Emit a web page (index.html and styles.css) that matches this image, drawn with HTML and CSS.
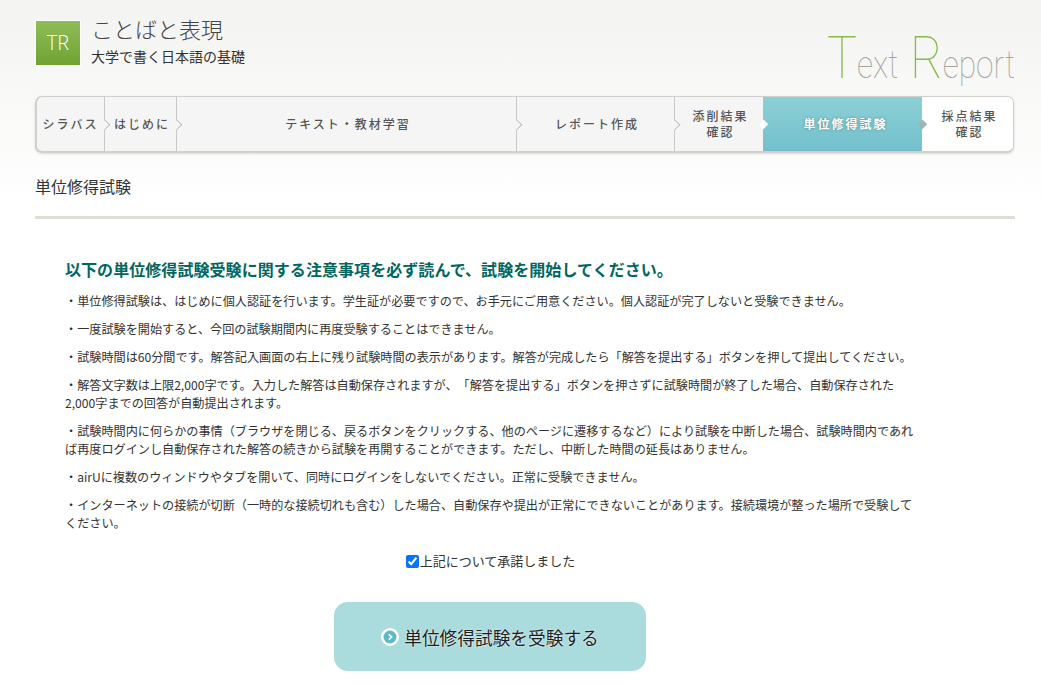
FILE: index.html
```html
<!DOCTYPE html>
<html lang="ja">
<head>
    <meta charset="UTF-8">
    <meta name="viewport" content="width=device-width, initial-scale=1.0">
    <title>単位修得試験 - ことばと表現</title>
    <link rel="stylesheet" href="styles.css">
</head>
<body>
    <header class="site-header">
        <div class="course">
            <div class="course-badge">TR</div>
            <div>
                <h1 class="course-title">ことばと表現</h1>
                <p class="course-sub">大学で書く日本語の基礎</p>
            </div>
        </div>
        <div class="brand"><span class="brand-cap">T</span><span class="brand-low">ext</span><span class="brand-cap brand-r">R</span><span class="brand-low">eport</span></div>
    </header>

    <nav class="steps">
        <a class="step step-syllabus">シラバス</a>
        <a class="step step-intro">はじめに</a>
        <a class="step step-text">テキスト・教材学習</a>
        <a class="step step-report">レポート作成</a>
        <a class="step step-review">添削結果<br>確認</a>
        <a class="step step-exam">単位修得試験</a>
        <a class="step step-score">採点結果<br>確認</a>
    </nav>

    <h2 class="page-title">単位修得試験</h2>

    <main class="notice">
        <h3 class="notice-head">以下の単位修得試験受験に関する注意事項を必ず読んで、試験を開始してください。</h3>
        <p>・単位修得試験は、はじめに個人認証を行います。学生証が必要ですので、お手元にご用意ください。個人認証が完了しないと受験できません。</p>
        <p>・一度試験を開始すると、今回の試験期間内に再度受験することはできません。</p>
        <p>・試験時間は60分間です。解答記入画面の右上に残り試験時間の表示があります。解答が完成したら「解答を提出する」ボタンを押して提出してください。</p>
        <p>・解答文字数は上限2,000字です。入力した解答は自動保存されますが、「解答を提出する」ボタンを押さずに試験時間が終了した場合、自動保存された<br>2,000字までの回答が自動提出されます。</p>
        <p>・試験時間内に何らかの事情（ブラウザを閉じる、戻るボタンをクリックする、他のページに遷移するなど）により試験を中断した場合、試験時間内であれ<br>ば再度ログインし自動保存された解答の続きから試験を再開することができます。ただし、中断した時間の延長はありません。</p>
        <p>・airUに複数のウィンドウやタブを開いて、同時にログインをしないでください。正常に受験できません。</p>
        <p>・インターネットの接続が切断（一時的な接続切れも含む）した場合、自動保存や提出が正常にできないことがあります。接続環境が整った場所で受験して<br>ください。</p>

        <label class="agree"><input type="checkbox" checked>上記について承諾しました</label>

        <div class="action">
            <button class="exam-button" type="button">
                <svg class="exam-icon" width="18" height="18" viewBox="0 0 18 18" aria-hidden="true">
                    <circle cx="9" cy="9" r="9" fill="#fff"/>
                    <circle cx="9" cy="9" r="6.5" fill="#5fb9c6"/>
                    <path d="M7.8 6.2 10.6 9 7.8 11.8" fill="none" stroke="#fff" stroke-width="1.6"/>
                </svg>
                単位修得試験を受験する
            </button>
        </div>
    </main>
</body>
</html>
```

FILE: styles.css
```css
body {
    font-family: "Noto Sans CJK JP", "Noto Sans", sans-serif;
    background: linear-gradient(#f3f3f1 0, #fff 205px) no-repeat;
    background-color: #fff;
    color: #333;
    margin: 0;
    padding: 0 26px 0 35px;
    overflow: hidden;
}

.site-header {
    display: flex;
    justify-content: space-between;
    height: 96px;
}

.course {
    display: flex;
    gap: 10px;
    padding-top: 20px;
}

.course-badge {
    width: 46px;
    height: 46px;
    box-sizing: border-box;
    border: 1px solid #fff;
    background: linear-gradient(#8fbd56, #70a332);
    color: #fff;
    font-family: "Open Sans", sans-serif;
    font-size: 20px;
    font-weight: 300;
    line-height: 44px;
    text-align: center;
}

.course-title {
    font-size: 22px;
    font-weight: 300;
    line-height: 24px;
    margin: -4px 0 0;
    color: #444;
}

.course-sub {
    font-size: 14px;
    line-height: 20px;
    margin: 6px 0 0;
}

.brand {
    display: flex;
    align-items: baseline;
    font-family: Roboto, sans-serif;
    font-weight: 100;
    height: 60px;
    padding-top: 28px;
    line-height: 60px;
    transform: scaleX(0.835);
    transform-origin: right center;
}

.brand-cap {
    font-size: 60px;
    color: #8abb50;
}

.brand-r {
    margin-left: 14px;
}

.brand-low {
    font-size: 38px;
    color: #a3a3a0;
}

.steps {
    display: flex;
    height: 57px;
    margin-right: 1px;
    border-radius: 7px;
    border: 1px solid #cfcfcb;
    border-left-width: 2px;
    border-bottom-width: 2px;
    box-sizing: border-box;
    background: #f5f5f6;
    box-shadow: 0 1px 3px rgba(0, 0, 0, 0.12);
}

.step {
    position: relative;
    display: flex;
    align-items: center;
    justify-content: center;
    box-sizing: border-box;
    padding-left: 3px;
    border-right: 1px solid #c8c8c8;
    color: #555;
    font-size: 12px;
    font-weight: 500;
    letter-spacing: 2px;
    line-height: 16px;
    text-align: center;
}

.step::after {
    content: "";
    position: absolute;
    right: -5px;
    top: 24px;
    width: 7px;
    height: 7px;
    background: #f5f5f6;
    border-top: 1px solid #bdbdbd;
    border-right: 1px solid #bdbdbd;
    transform: rotate(45deg) scaleX(0.9);
    z-index: 1;
}

.step-syllabus {
    width: 68px;
    padding-left: 0;
    border-radius: 6px 0 0 6px;
}

.step-intro {
    width: 72px;
}

.step-text {
    width: 340px;
}

.step-report {
    width: 158px;
}

.step-review {
    width: 88px;
    border-right: 0;
}

.step-review::after {
    right: -4px;
    background: #fff;
    border: 0;
}

.step-exam {
    width: 159px;
    padding-left: 6px;
    border-right: 0;
    background: linear-gradient(#8dd0d6, #72c0cc);
    color: #fff;
    font-weight: 700;
    text-shadow: 0 0 3px rgba(0, 0, 0, 0.35);
}

.step-exam::after {
    right: -4px;
    background: #9fb4b8;
    border: 0;
}

.step-score {
    flex: 1;
    padding-left: 4px;
    border-right: 0;
    background: #fff;
    border-radius: 0 6px 6px 0;
}

.step-score::after {
    display: none;
}

.page-title {
    font-size: 16px;
    font-weight: 400;
    line-height: 24px;
    margin: 0;
    padding: 21px 0 18px;
    border-bottom: 3px solid #dfded6;
}

.notice {
    padding: 38px 0 0 30px;
    width: 850px;
    font-size: 12.13px;
    line-height: 18px;
    text-spacing-trim: space-all;
}

.notice-head {
    color: #00665f;
    font-size: 16px;
    font-weight: 700;
    letter-spacing: 0.06px;
    line-height: 24px;
    margin: 0 0 11px;
    white-space: nowrap;
}

.notice p {
    margin: 0 0 10px;
    white-space: nowrap;
}

.agree {
    display: flex;
    align-items: center;
    justify-content: center;
    font-size: 13px;
    line-height: 20px;
    margin-top: 19px;
    padding-left: 1px;
}

.agree input {
    width: 13px;
    height: 13px;
    margin: 0 1px 0 0;
}

.action {
    display: flex;
    justify-content: center;
    margin-top: 31px;
}

.exam-button {
    display: flex;
    align-items: center;
    justify-content: center;
    gap: 5px;
    width: 312px;
    height: 69px;
    border: 0;
    border-radius: 14px;
    background: #aadcde;
    color: #1f1f1f;
    font-family: inherit;
    font-size: 17.7px;
    text-shadow: 0 0 2px #fff;
    cursor: pointer;
}
```
